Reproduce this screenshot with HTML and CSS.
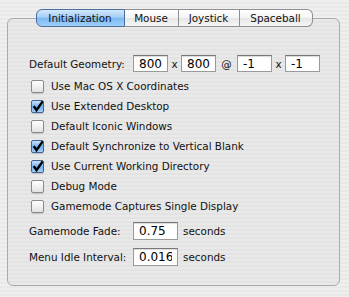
FILE: index.html
```html
<!DOCTYPE html>
<html lang="en">
  <head>
    <title>GLUT Preferences</title>
    <link rel="stylesheet" href="styles.css">
  </head>
  <body>
    <div class="tabview">
      <div class="tabs">
        <span class="tab selected">Initialization</span>
        <span class="tab">Mouse</span>
        <span class="tab">Joystick</span>
        <span class="tab">Spaceball</span>
      </div>
      <div class="panel">
        <div class="geometry">
          <span class="label">Default Geometry:</span>
          <input class="field" type="text" value="800" />
          <span class="sep">x</span>
          <input class="field" type="text" value="800" />
          <span class="sep at">@</span>
          <input class="field" type="text" value="-1" />
          <span class="sep">x</span>
          <input class="field" type="text" value="-1" />
        </div>

        <ul class="checks">
          <li><span class="box"></span>Use Mac OS X Coordinates</li>
          <li><span class="box on"></span>Use Extended Desktop</li>
          <li><span class="box"></span>Default Iconic Windows</li>
          <li><span class="box on"></span>Default Synchronize to Vertical Blank</li>
          <li><span class="box on"></span>Use Current Working Directory</li>
          <li><span class="box"></span>Debug Mode</li>
          <li><span class="box"></span>Gamemode Captures Single Display</li>
        </ul>

        <div class="timing">
          <span class="label">Gamemode Fade:</span>
          <input class="field wide" type="text" value="0.75" />
          <span class="unit">seconds</span>
        </div>
        <div class="timing idle">
          <span class="label">Menu Idle Interval:</span>
          <input class="field wide" type="text" value="0.016" />
          <span class="unit">seconds</span>
        </div>
      </div>
    </div>
  </body>
</html>
```

FILE: styles.css
```css
body {
  margin: 0;
  width: 349px;
  height: 297px;
  font-family: "DejaVu Sans", sans-serif;
  font-size: 10.4px;
  color: #111;
  background: repeating-linear-gradient(#efefef 0 2px, #e9e9e9 2px 4px);
}
.tabview {
  padding: 9px 9px 0 7px;
}
.tabs {
  display: flex;
  justify-content: center;
  position: relative;
  z-index: 1;
  margin-bottom: -9px;
  padding-left: 1px;
}
.tab {
  height: 16px;
  line-height: 16px;
  font-size: 10.4px;
  text-align: center;
  border: 1px solid #8f8f8f;
  border-left: none;
  background: linear-gradient(#ffffff 0%, #f4f4f4 50%, #e6e6e6 51%, #f6f6f6 100%);
}
.tab:nth-child(1) { width: 87px; border-left: 1px solid #4a6f9e; border-radius: 6px 0 0 6px; }
.tab:nth-child(2) { width: 53px; }
.tab:nth-child(3) { width: 60px; }
.tab:nth-child(4) { width: 72px; border-radius: 0 6px 6px 0; }
.tab.selected {
  border-color: #4a6f9e;
  background: linear-gradient(#d3e8fc 0%, #a4cef6 45%, #7bb8f1 52%, #9fd0fb 100%);
}
.panel {
  height: 268px;
  border: 1px solid #aaaaaa;
  border-radius: 6px;
  background: repeating-linear-gradient(#e9e9e9 0 2px, #e3e3e3 2px 4px);
  padding: 36px 0 0 21px;
  box-sizing: border-box;
}
.geometry, .timing {
  display: flex;
  align-items: center;
  height: 17px;
}
.label {
  width: 104px;
  flex-shrink: 0;
  white-space: nowrap;
}
.field {
  width: 35px;
  height: 17px;
  box-sizing: border-box;
  margin: 0;
  padding: 0 5px;
  font: inherit;
  font-size: 12px;
  border: 1px solid #9a9a9a;
  border-top-color: #777;
  background: #fff;
  box-shadow: inset 0 1px 1px rgba(0, 0, 0, 0.15);
}
.field.wide {
  width: 45px;
  height: 18px;
}
.sep {
  width: 13px;
  text-align: center;
}
.sep.at {
  width: 21px;
}
.checks {
  list-style: none;
  margin: 4px 0 6px 2px;
  padding: 0;
}
.checks li {
  display: flex;
  align-items: center;
  height: 20px;
}
.box {
  width: 11px;
  height: 11px;
  margin-right: 7px;
  border: 1px solid #8a8a8a;
  border-radius: 2px;
  background: linear-gradient(#ffffff, #e2e2e2);
  box-shadow: 0 1px 1px rgba(0, 0, 0, 0.15);
}
.box.on {
  border-color: #3e6391;
  background: url("data:image/svg+xml,%3Csvg xmlns='http://www.w3.org/2000/svg' width='11' height='11'%3E%3Cpath d='M1.8 5.2 L4.5 9.2 L10.8 0.2' fill='none' stroke='%23000' stroke-width='2.4'/%3E%3C/svg%3E") no-repeat center,
    linear-gradient(#c8e1fb, #6faef0 55%, #a6d2fb);
}
.unit {
  margin-left: 5px;
}
.timing.idle {
  margin-top: 8px;
  height: 19px;
}
```
